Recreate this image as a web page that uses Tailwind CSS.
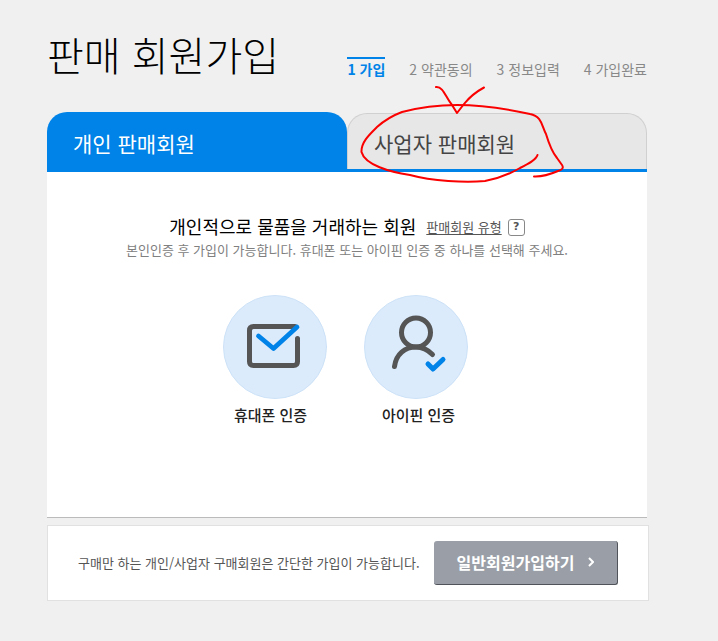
<!DOCTYPE html>
<html lang="ko">
<head>
<meta charset="utf-8">
<meta name="viewport" content="width=device-width, initial-scale=1">
<title>판매 회원가입</title>
<script src="https://cdn.jsdelivr.net/npm/@tailwindcss/browser@4"></script>
</head>
<body class="min-h-screen bg-[#f0f0f0] font-['Noto_Sans_CJK_KR',sans-serif] text-[#222]">
<div class="relative pt-[30px] pr-[69px] pb-10 pl-[47px]">
  <header class="mr-0.5 flex h-[82px] items-start justify-between">
    <h1 class="text-[40px] leading-12 font-light whitespace-nowrap text-black">판매 회원가입</h1>
    <ol class="flex gap-6 pt-[27px] text-sm leading-5 whitespace-nowrap text-[#888]">
      <li class="border-t-2 border-[#0083e8] font-bold text-[#0083e8]" aria-current="step">1 가입</li>
      <li class="border-t-2 border-transparent">2 약관동의</li>
      <li class="border-t-2 border-transparent">3 정보입력</li>
      <li class="border-t-2 border-transparent">4 가입완료</li>
    </ol>
  </header>

  <main>
    <div class="mr-0.5">
      <nav class="flex h-[60px] items-end border-b-3 border-[#0083e8] text-[21px] leading-8" aria-label="회원 유형">
        <a href="#personal" class="flex h-[57px] w-1/2 items-center rounded-t-[20px] bg-[#0083e8] pt-1 pl-[26px] text-white" aria-current="page">개인 판매회원</a>
        <a href="#business" class="flex h-14 w-1/2 items-center rounded-t-[20px] border border-b-0 border-[#d0d0d0] bg-[#e7e7e7] pt-0.5 pl-[26px] text-[#444]">사업자 판매회원</a>
      </nav>

      <section id="personal" class="flex min-h-[346px] flex-col items-center border-b border-[#bbb] bg-white pt-10">
        <div class="flex items-center gap-2.5">
          <h2 class="text-lg leading-7 text-black">개인적으로 물품을 거래하는 회원</h2>
          <a href="#types" class="flex items-center gap-1.5 pt-0.5 text-[13px] leading-5 text-[#555]">
            <span class="underline underline-offset-2">판매회원 유형</span>
            <span class="flex size-[17px] items-center justify-center rounded-[3px] border border-[#888] font-['DejaVu_Sans',sans-serif] text-[11px] font-bold">?</span>
          </a>
        </div>
        <p class="text-[13px] leading-5 text-[#808080]">본인인증 후 가입이 가능합니다. 휴대폰 또는 아이핀 인증 중 하나를 선택해 주세요.</p>
        <div class="mt-[35px] mr-1 flex gap-[37px] text-[15px] leading-6">
          <button type="button" class="flex w-26 flex-col items-center gap-1 font-medium">
            <svg class="size-26" viewBox="0 0 104 104" fill="none" stroke-linecap="round" stroke-linejoin="round" aria-hidden="true">
              <circle cx="52" cy="52" r="51.5" fill="#dbebfc" stroke="#cde2f7"/>
              <path d="M72 31.500H30.500Q26.500 31.500 26.500 35.500V66.500Q26.500 70.500 30.500 70.500H70.500Q74.500 70.500 74.500 66.500V43.500" stroke="#555" stroke-width="5"/>
              <path d="M35.500 41L50.500 53.500L74 32" stroke="#0083e8" stroke-width="4.800"/>
            </svg>
            <span class="pr-2">휴대폰 인증</span>
          </button>
          <button type="button" class="flex w-26 flex-col items-center gap-1 font-medium">
            <svg class="size-26" viewBox="0 0 104 104" fill="none" stroke-linecap="round" stroke-linejoin="round" aria-hidden="true">
              <circle cx="52" cy="52" r="51.5" fill="#dbebfc" stroke="#cde2f7"/>
              <circle cx="52" cy="37.500" r="14.500" stroke="#555" stroke-width="5"/>
              <path d="M30.500 71.500C32 59 41 52 52 52C58.500 52 64 55 68.500 59.500" stroke="#555" stroke-width="5"/>
              <path d="M64 69L69 74L79 64.500" stroke="#0083e8" stroke-width="5"/>
            </svg>
            <span class="pl-1.5">아이핀 인증</span>
          </button>
        </div>
      </section>
    </div>

    <section class="mt-[7px] flex items-center justify-between border border-[#e1e1e1] bg-white px-[30px] py-[15px]">
      <p class="text-[13px] leading-5 text-[#555]">구매만 하는 개인/사업자 구매회원은 간단한 가입이 가능합니다.</p>
      <a href="#join" class="flex h-11 w-46 items-center justify-center gap-3.5 rounded-[3px] border-r border-b border-[#50545a] bg-[#9a9fa7] pb-0.5 text-base leading-6 font-bold whitespace-nowrap text-white">일반회원가입하기
        <svg class="h-2.5 w-1.5" viewBox="0 0 6 10" fill="none" stroke="#fff" stroke-width="2" aria-hidden="true"><path d="M1 1L5 5L1 9"/></svg>
      </a>
    </section>
  </main>

  <svg class="pointer-events-none absolute top-0 left-0 h-[200px] w-[718px]" viewBox="0 0 718 200" fill="none" stroke="#fa0000" stroke-width="2" stroke-linecap="round" stroke-linejoin="round" aria-hidden="true">
    <path d="M436 87C443 86 446 98 452 105L457 113L464 104Q472 94 484 87.500"/>
    <path d="M537.500 155C536 160 528 164 520 168C508 175 496 179 485 181C465 183 432 181 410 175C390 172 365 165 361.500 152C361 142 370 134 377 127C386 119 394 115 402 112C421 107 439 105 457 105C482 105 507 109 530 114C542 116 542 127 546 134C549 144 552 152 557 158L562 165C564 168 562 170 558 171C551 174 543 177 534 176.500"/>
  </svg>
</div>
</body>
</html>
